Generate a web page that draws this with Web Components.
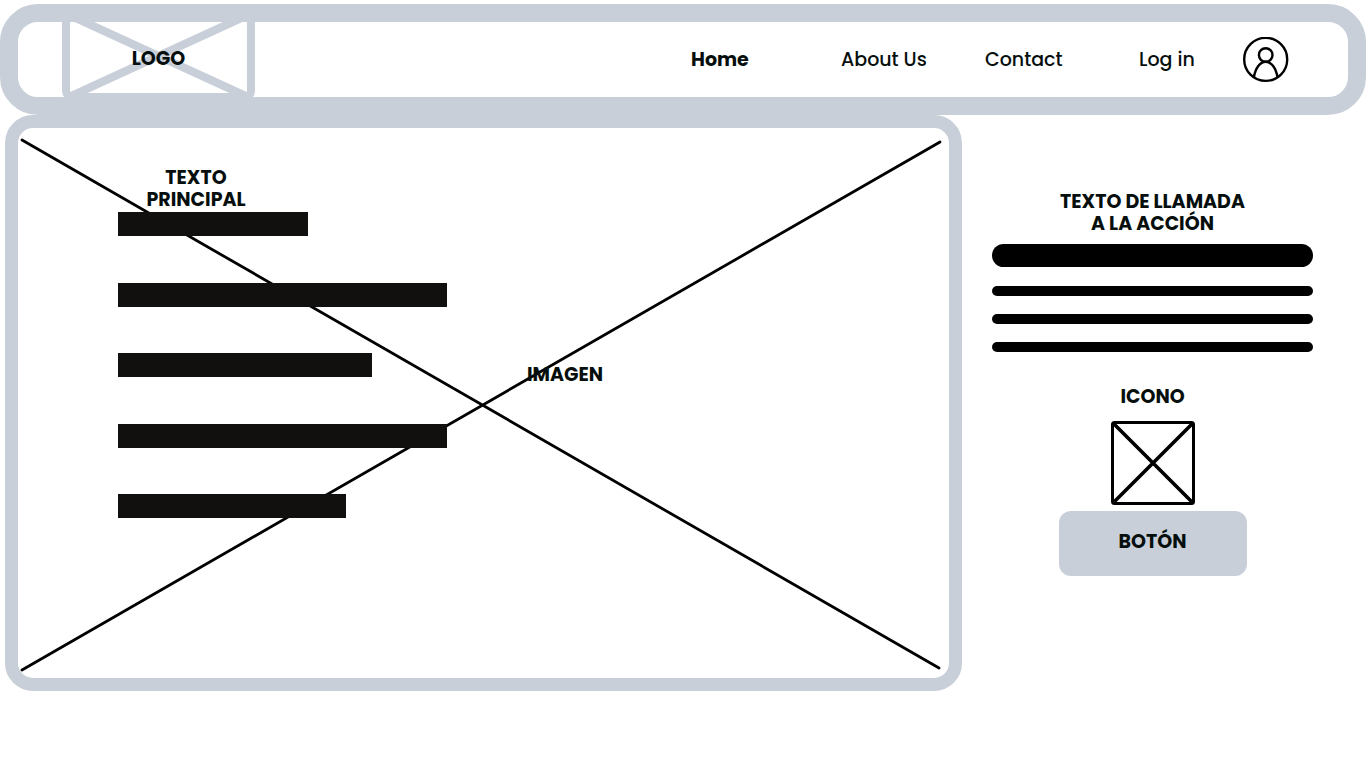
<!DOCTYPE html>
<html lang="es">
<head>
<meta charset="utf-8">
<meta name="viewport" content="width=device-width, initial-scale=1">
<title>Wireframe</title>
<style>
  :root {
    --frame: #c8cfd9;
    --ink: #060f0d;
    --bar: #11100e;
  }
  body {
    margin: 0;
    padding-top: 4px;
    background: #fff;
    color: var(--ink);
    font-family: Poppins, Inter, "Noto Sans", sans-serif;
    font-size: 19px;
    line-height: 22px;
  }
</style>
</head>
<body>
<wire-page></wire-page>
<script>
const define = (name, html, setup) => {
  const template = document.createElement('template');
  template.innerHTML = html;
  customElements.define(name, class extends HTMLElement {
    constructor() {
      super();
      this.attachShadow({ mode: 'open' }).append(template.content.cloneNode(true));
    }
    connectedCallback() {
      if (setup) setup(this);
    }
  });
};

define('wire-logo', `
  <style>
    :host { display: grid; place-items: center; width: 193px; height: 94px; font-weight: 700; }
    svg, a { grid-area: 1 / 1; }
    svg { display: block; }
    a { color: inherit; text-decoration: none; padding-top: 6px; }
  </style>
  <svg width="193" height="94" viewBox="0 0 193 94" fill="none" stroke="#c8cfd9" stroke-width="8" aria-hidden="true">
    <rect x="4" y="4" width="185" height="84" rx="6"/>
    <path d="M5 5 188 89M188 5 5 89"/>
  </svg>
  <a href="#"><slot></slot></a>`);

define('nav-link', `
  <style>
    :host { display: block; font-weight: 500; white-space: nowrap; }
    :host([current]) { font-weight: 700; }
    a { color: inherit; text-decoration: none; }
  </style>
  <a href="#"><slot></slot></a>`, host => {
    if (host.hasAttribute('current')) host.shadowRoot.querySelector('a').setAttribute('aria-current', 'page');
  });

define('user-avatar', `
  <style>
    :host { display: block; }
    a { display: block; }
    svg { display: block; }
  </style>
  <a href="#" aria-label="Log in">
    <svg width="46" height="46" viewBox="0 0 46 46" fill="none" stroke="#000" stroke-width="2.4">
      <circle cx="22.7" cy="22.4" r="21.5"/>
      <circle cx="22.7" cy="18" r="6.8"/>
      <path d="M10.800 40.500C12.500 31 17 24.800 22.700 24.800S32.900 31 34.600 40.500"/>
    </svg>
  </a>`);

define('site-header', `
  <style>
    :host { display: block; }
    header {
      display: flex; align-items: center; justify-content: space-between;
      box-sizing: border-box; min-height: 111px; padding: 0 59px 0 44px;
      border: 18px solid var(--frame); border-radius: 38px;
    }
    /* the logo frame tucks under the header's own frame */
    wire-logo { margin: -13px 0 -6px; }
    nav {
      display: grid; align-items: center;
      grid-template-columns: 150px 144px 154px 104px 46px;
    }
  </style>
  <header>
    <wire-logo>LOGO</wire-logo>
    <nav aria-label="Principal">
      <nav-link current>Home</nav-link>
      <nav-link>About Us</nav-link>
      <nav-link>Contact</nav-link>
      <nav-link>Log in</nav-link>
      <user-avatar></user-avatar>
    </nav>
  </header>`);

define('text-bar', `
  <style>
    :host { display: block; height: 24px; background: var(--bar); }
    :host([round]) { height: 23px; border-radius: 12px; background: #000; }
    :host([thin]) { height: 10px; border-radius: 5px; background: #000; }
  </style>`, host => {
    const width = host.getAttribute('width');
    if (width) host.style.width = width + 'px';
  });

define('hero-panel', `
  <style>
    :host {
      display: grid; box-sizing: border-box; aspect-ratio: 957 / 576;
      border: 13px solid var(--frame); border-radius: 28px;
    }
    svg, .content { grid-area: 1 / 1; }
    svg { display: block; width: 100%; height: 100%; min-height: 0; }
    .content { display: flex; align-items: flex-start; gap: 80px; padding: 39px 0 0 100px; font-weight: 700; }
    .copy { width: 329px; }
    h1 { width: 156px; margin: 0 0 1px; font-size: inherit; text-align: center; }
    .bars { display: flex; flex-direction: column; justify-content: space-between; height: 306px; }
    .caption { padding-top: 197px; }
  </style>
  <svg viewBox="0 0 931 550" preserveAspectRatio="none" stroke="#000" stroke-width="2.8" stroke-linecap="round" aria-hidden="true">
    <path d="M4 12 921 540M4 542 922 14"/>
  </svg>
  <div class="content">
    <div class="copy">
      <h1>TEXTO<br>PRINCIPAL</h1>
      <div class="bars">
        <text-bar width="190"></text-bar>
        <text-bar width="329"></text-bar>
        <text-bar width="254"></text-bar>
        <text-bar width="329"></text-bar>
        <text-bar width="228"></text-bar>
      </div>
    </div>
    <div class="caption">IMAGEN</div>
  </div>`);

define('action-button', `
  <style>
    :host { display: block; }
    button {
      display: block; width: 188px; height: 65px; padding: 0 0 4px; border: 0; border-radius: 12px;
      background: var(--frame); color: inherit; font: inherit; font-weight: 700; cursor: pointer;
    }
  </style>
  <button type="button"><slot></slot></button>`);

define('call-to-action', `
  <style>
    :host { display: flex; flex-direction: column; align-items: center; padding-top: 76px; font-weight: 700; }
    h2, h3 { margin: 0; font-size: inherit; text-align: center; }
    h2 { margin-bottom: 9px; }
    .bars { display: grid; gap: 18px; align-self: stretch; margin-bottom: 34px; }
    text-bar[round] { margin-bottom: 1px; }
    svg { display: block; margin: 13px 0 6px; }
  </style>
  <h2>TEXTO DE LLAMADA<br>A LA ACCIÓN</h2>
  <div class="bars">
    <text-bar round></text-bar>
    <text-bar thin></text-bar>
    <text-bar thin></text-bar>
    <text-bar thin></text-bar>
  </div>
  <h3>ICONO</h3>
  <svg width="84" height="84" viewBox="0 0 84 84" fill="none" stroke="#000" aria-hidden="true">
    <rect x="1.500" y="1.500" width="81" height="81" rx="2" stroke-width="3"/>
    <path d="M2 2 82 82M82 2 2 82" stroke-width="3.600"/>
  </svg>
  <action-button>BOTÓN</action-button>`);

define('wire-page', `
  <style>
    :host { display: block; }
    main {
      display: grid; align-items: start; gap: 30px; padding: 0 53px 0 5px;
      grid-template-columns: minmax(0, 957fr) minmax(0, 321fr);
    }
  </style>
  <site-header></site-header>
  <main>
    <hero-panel></hero-panel>
    <call-to-action></call-to-action>
  </main>`);
</script>
</body>
</html>
